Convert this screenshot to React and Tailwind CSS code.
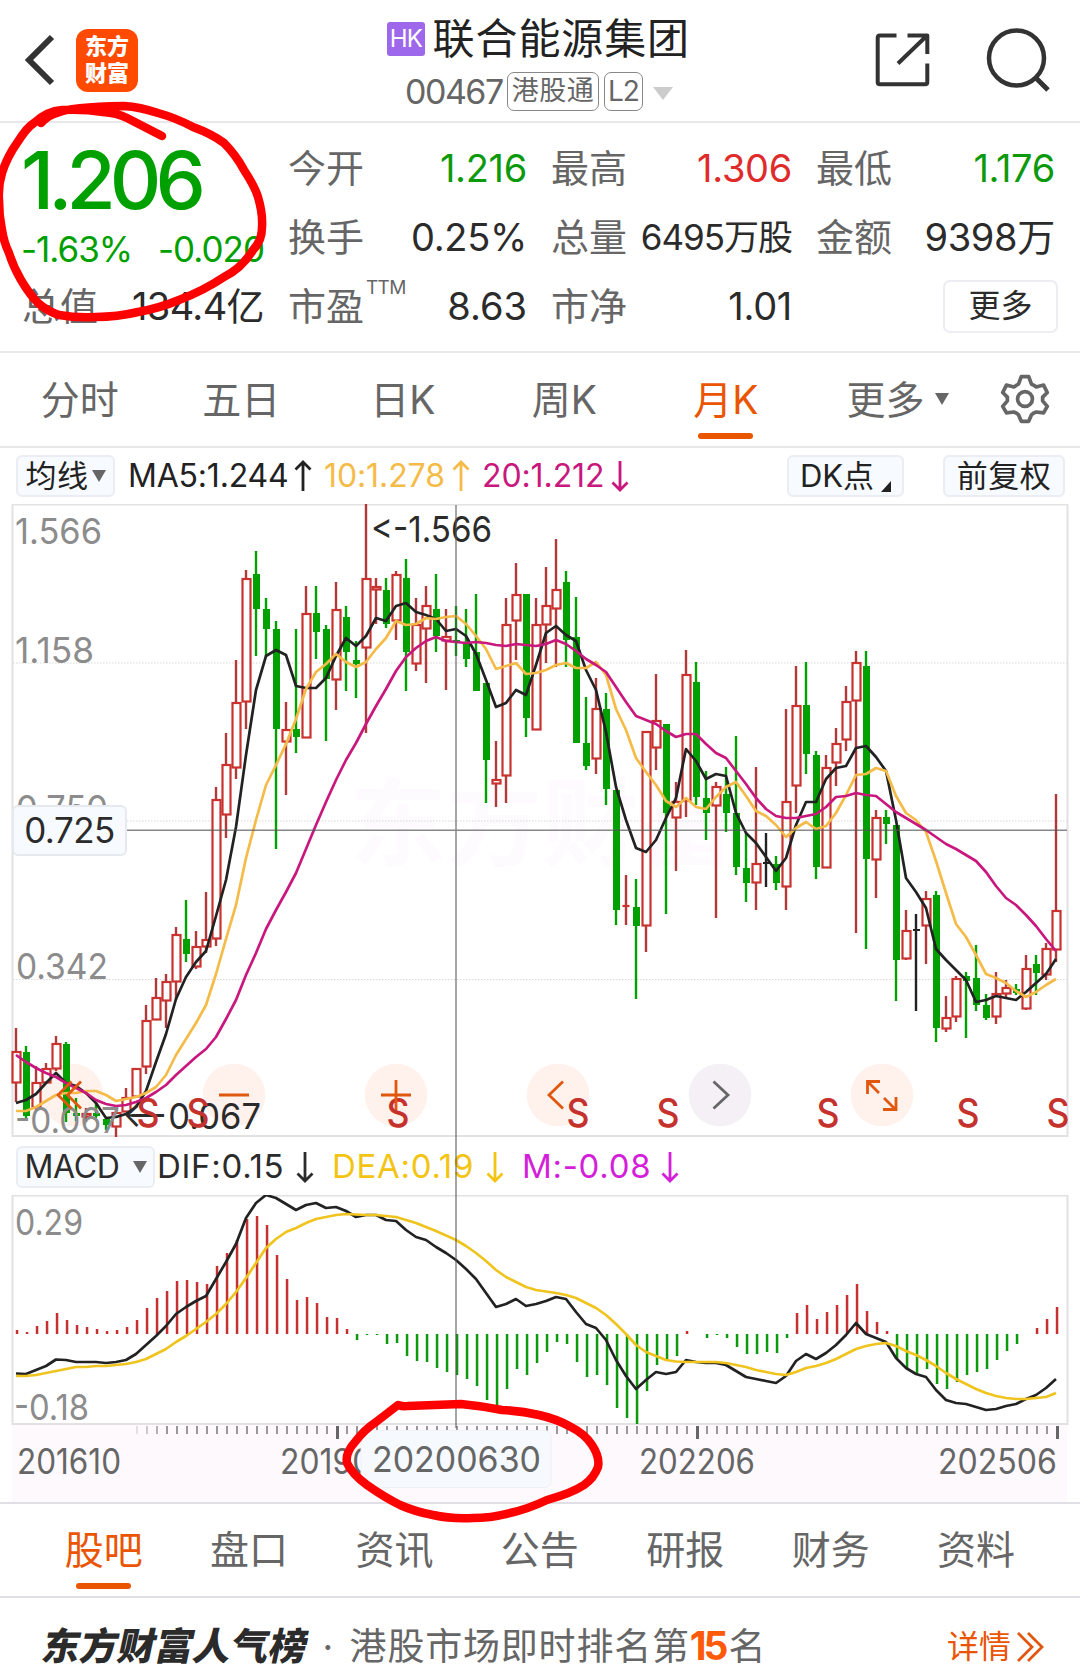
import React from 'react';

// x of the n-th month on every chart
const px = (i) => 16 + i * 10;

// [type, high, low, bodyTop, bodyBottom]  r = up, g = down, k = flat
const candles = [
  ['r', 1028, 1102, 1051, 1083], ['g', 1046, 1118, 1052, 1116], ['r', 1066, 1110, 1082, 1108], ['r', 1063, 1083, 1068, 1083],
  ['r', 1036, 1071, 1043, 1069], ['g', 1042, 1122, 1044, 1113], ['g', 1098, 1121, 1113, 1116], ['r', 1108, 1122, 1113, 1117],
  ['g', 1103, 1118, 1113, 1116], ['g', 1117, 1130, 1119, 1125], ['r', 1110, 1137, 1112, 1127], ['r', 1088, 1112, 1097, 1112],
  ['r', 1068, 1097, 1068, 1097], ['r', 1005, 1074, 1020, 1067], ['r', 978, 1020, 997, 1020], ['r', 974, 1028, 981, 1001],
  ['r', 927, 1000, 934, 982], ['g', 900, 962, 939, 954], ['r', 931, 969, 946, 967], ['r', 892, 953, 939, 947],
  ['r', 787, 946, 799, 939], ['r', 733, 838, 764, 815], ['r', 660, 779, 702, 768], ['r', 570, 729, 578, 702],
  ['g', 551, 656, 574, 609], ['g', 598, 656, 609, 629], ['g', 621, 849, 629, 729], ['r', 702, 795, 729, 742],
  ['g', 629, 753, 729, 737], ['r', 586, 738, 613, 738], ['g', 586, 659, 613, 632], ['g', 625, 741, 629, 679],
  ['r', 582, 710, 609, 680], ['g', 606, 691, 617, 652], ['g', 641, 698, 660, 664], ['r', 504, 733, 578, 648],
  ['r', 578, 624, 586, 590], ['g', 578, 628, 590, 624], ['r', 571, 640, 574, 621], ['g', 559, 691, 578, 652],
  ['r', 598, 671, 624, 664], ['r', 586, 683, 605, 629], ['g', 574, 652, 609, 636], ['r', 609, 690, 636, 641],
  ['g', 606, 656, 640, 643], ['g', 609, 667, 644, 659], ['g', 594, 690, 652, 691], ['g', 683, 803, 683, 760],
  ['r', 741, 807, 779, 784], ['r', 598, 803, 624, 776], ['r', 563, 660, 594, 621], ['g', 594, 737, 594, 718],
  ['r', 598, 730, 624, 730], ['r', 567, 663, 605, 625], ['r', 539, 667, 589, 609], ['g', 571, 667, 582, 640],
  ['g', 597, 743, 637, 743], ['g', 697, 770, 743, 766], ['r', 678, 774, 708, 759], ['g', 693, 805, 709, 789],
  ['g', 790, 925, 790, 910], ['r', 875, 925, 905, 907], ['g', 879, 999, 907, 926], ['r', 731, 952, 731, 926],
  ['r', 674, 770, 720, 748], ['g', 724, 914, 724, 813], ['r', 782, 871, 801, 818], ['r', 650, 817, 674, 801],
  ['g', 662, 805, 682, 797], ['g', 771, 840, 798, 813], ['r', 782, 918, 786, 806], ['g', 767, 832, 794, 813],
  ['g', 736, 875, 813, 867], ['g', 833, 902, 868, 883], ['r', 767, 910, 863, 883], ['k', 833, 887, 862, 864],
  ['g', 856, 890, 864, 883], ['r', 709, 910, 801, 887], ['r', 666, 813, 705, 786], ['g', 662, 774, 705, 754],
  ['g', 751, 879, 755, 867], ['r', 755, 868, 767, 868], ['r', 728, 786, 743, 763], ['r', 686, 751, 701, 740],
  ['r', 651, 933, 662, 701], ['g', 651, 949, 666, 859], ['r', 810, 898, 817, 860], ['g', 810, 844, 817, 824],
  ['g', 825, 1001, 825, 960], ['r', 910, 960, 930, 959], ['k', 914, 1011, 929, 931], ['r', 891, 964, 898, 926],
  ['g', 891, 1042, 895, 1028], ['r', 996, 1032, 1017, 1029], ['r', 976, 1022, 978, 1017], ['g', 972, 1038, 976, 981],
  ['g', 945, 1011, 978, 1005], ['g', 994, 1020, 1005, 1018], ['r', 972, 1024, 993, 1017], ['r', 980, 997, 987, 994],
  ['g', 984, 995, 989, 993], ['r', 955, 1010, 968, 1009], ['g', 955, 995, 964, 973], ['r', 943, 980, 948, 975],
  ['r', 794, 962, 910, 950],
];

const ma5 = [
  1103, 1100, 1094, 1083, 1073, 1083, 1086, 1093, 1103, 1118, 1117, 1114, 1107, 1091, 1062, 1034, 999, 977, 962, 951, 916, 880,
  827, 755, 690, 656, 650, 655, 686, 688, 688, 678, 656, 638, 646, 636, 618, 621, 606, 603, 612, 615, 619, 631, 629, 636, 654,
  680, 707, 703, 690, 695, 665, 633, 626, 635, 641, 670, 690, 732, 787, 820, 848, 852, 840, 818, 798, 749, 761, 779, 774, 776,
  813, 833, 843, 857, 871, 858, 825, 802, 802, 779, 768, 766, 748, 746, 757, 771, 820, 878, 892, 908, 949, 960, 970, 980, 1002,
  1000, 996, 998, 1000, 992, 983, 974, 959,
];
const ma10 = [
  1111, 1111, 1107, 1101, 1095, 1093, 1093, 1091, 1091, 1095, 1101, 1099, 1097, 1093, 1087, 1075, 1055, 1039, 1023, 1005, 974,
  939, 905, 858, 820, 785, 765, 744, 719, 689, 672, 664, 654, 662, 667, 662, 649, 638, 621, 625, 624, 618, 619, 617, 616, 624,
  636, 649, 669, 666, 663, 674, 673, 670, 665, 663, 668, 668, 662, 675, 709, 730, 758, 772, 785, 801, 807, 798, 807, 809, 797,
  787, 782, 796, 811, 816, 825, 837, 828, 822, 829, 826, 813, 795, 775, 774, 768, 771, 796, 813, 820, 832, 861, 893, 924, 937,
  955, 974, 978, 983, 991, 997, 992, 985, 979,
];
const ma20 = [
  1055, 1062, 1068, 1073, 1077, 1083, 1088, 1093, 1100, 1104, 1106, 1105, 1102, 1098, 1092, 1085, 1075, 1066, 1057, 1049, 1037,
  1019, 1000, 975, 953, 929, 910, 892, 873, 849, 825, 802, 780, 760, 743, 724, 706, 689, 671, 657, 648, 641, 637, 641, 642, 643,
  642, 643, 645, 646, 644, 645, 646, 644, 640, 644, 651, 659, 665, 672, 687, 702, 716, 720, 724, 731, 737, 734, 734, 744, 753,
  758, 771, 784, 798, 809, 816, 818, 818, 816, 814, 807, 797, 796, 793, 795, 796, 804, 812, 818, 824, 830, 837, 844, 849, 855,
  861, 872, 886, 898, 905, 915, 926, 939, 951,
];
const bars = [
  4, 2, 8, 13, 21, 14, 9, 7, 5, 3, 4, 7, 14, 26, 36, 43, 53, 54, 52, 50, 68, 81, 94, 115, 118, 109, 79, 55, 34, 37, 31, 17, 16,
  5, -6, -1, -1, -10, -9, -22, -27, -28, -34, -38, -41, -45, -52, -66, -71, -55, -35, -41, -29, -18, -8, -10, -28, -43, -41,
  -51, -74, -84, -90, -57, -31, -27, -22, 3, 0, -4, -1, -4, -13, -20, -20, -18, -19, -4, 21, 29, 15, 22, 29, 39, 50, 23, 12, 3,
  -24, -34, -39, -35, -50, -55, -48, -41, -38, -35, -26, -17, -10, 0, 6, 15, 27,
];
const dif = [
  1373.5, 1374, 1370, 1366, 1359.5, 1360, 1362, 1362, 1362, 1363, 1362, 1360, 1354, 1345, 1336, 1326, 1314, 1307, 1301, 1296,
  1279, 1262, 1244, 1218, 1203, 1195, 1198, 1204, 1210, 1205, 1203, 1208, 1207, 1211, 1217, 1215, 1215, 1220, 1221, 1230, 1237,
  1240, 1247, 1253, 1260, 1269, 1279, 1293, 1307, 1304, 1299, 1306, 1304, 1301, 1297, 1299, 1312, 1324, 1328, 1340, 1360, 1376,
  1389, 1380, 1372, 1374, 1372, 1360, 1362, 1363, 1363, 1365, 1371, 1377, 1379, 1381, 1383, 1376, 1361, 1354, 1359, 1353, 1345,
  1335, 1323, 1334, 1338, 1342, 1358, 1368, 1374, 1377, 1390, 1400, 1403, 1404, 1407, 1410, 1409, 1406, 1404, 1399, 1395, 1388,
  1379,
];
const dea = [
  1376, 1376, 1375, 1373, 1371, 1369, 1367, 1367, 1366, 1366, 1365, 1364, 1362, 1359, 1354, 1349, 1342, 1336, 1329, 1322, 1314,
  1304, 1292, 1278, 1263, 1248, 1239, 1232, 1228, 1223, 1219, 1217, 1215, 1214, 1214.5, 1215, 1215, 1216, 1217, 1220, 1223,
  1227, 1231, 1235.5, 1240, 1246, 1253, 1261, 1270, 1277, 1282, 1287, 1290, 1291.5, 1293, 1295, 1298, 1303, 1308, 1315, 1324,
  1334, 1345, 1352, 1356, 1360, 1361.5, 1362, 1362, 1362, 1362, 1363, 1365, 1367, 1370, 1372, 1374, 1375, 1372, 1368, 1366,
  1363, 1359, 1354, 1349, 1346, 1344, 1343, 1346, 1351, 1355, 1360, 1366, 1373, 1379, 1384, 1389, 1393, 1396, 1398, 1399, 1399,
  1398, 1397, 1393,
];

const toPoints = (ys) => ys.map((y, i) => `${px(i)},${y}`).join(' ');

const periods = ['分时', '五日', '日K', '周K', '月K'];
const sections = ['股吧', '盘口', '资讯', '公告', '研报', '财务', '资料'];

function Line({ ys, color }) {
  return <polyline points={toPoints(ys)} fill="none" stroke={color} strokeWidth="2.7" strokeLinejoin="round" />;
}

// Text on a chart, w is the drawn width
function Label({ x, y, w, size = 36, color = '#8c8c8c', children }) {
  return (
    <text x={x} y={y} fontSize={size} fill={color} textLength={w} lengthAdjust="spacingAndGlyphs">
      {children}
    </text>
  );
}

function Candle({ i, c }) {
  const [type, high, low, top, bottom] = c;
  const x = px(i);
  if (type === 'r') {
    return (
      <g stroke="#c8322f" strokeWidth="2.2">
        <path d={`M${x} ${high}V${top}M${x} ${bottom}V${low}`} stroke="#b03a3a" strokeWidth="2.4" />
        {bottom - top < 3 ? (
          <path d={`M${x - 3.5} ${top + 1}h7`} />
        ) : (
          <rect x={x - 3.5} y={top + 1} width="8" height={Math.max(bottom - top - 1.5, 1.5)} fill="#fff" />
        )}
      </g>
    );
  }
  const color = type === 'g' ? '#00a000' : '#222';
  return (
    <g fill={color}>
      <rect x={x - 1.2} y={high} width="2.4" height={low - high} />
      <rect x={x - 3} y={top} width="7" height={Math.max(bottom - top, 2)} />
    </g>
  );
}

function KLineChart() {
  return (
    <svg className="block" width="1080" height="633" viewBox="0 504 1080 633" fontFamily="Inter, 'Noto Sans CJK SC', sans-serif">
      <text x="350" y="858" fontSize="96" fontWeight="bold" fill="#fefbfe" fontFamily="'Noto Sans CJK SC', sans-serif">东方财富</text>
      <path d="M12.5 504.5H1067.5V1136H12.5Z" fill="none" stroke="#e2e2e2" strokeWidth="2" />
      <path d="M13 663H1067M13 821H1067M13 979.5H1067" stroke="#d8d8d8" strokeDasharray="1.5 1.5" />
      {/* round tool buttons */}
      <g fill="#fff1ec">
        {[72, 234, 396, 558, 882].map((x) => <circle key={x} cx={x} cy="1095" r="31.3" />)}
        <circle cx="720" cy="1095" r="31.3" fill="#f4f0f6" />
      </g>
      {candles.map((c, i) => <Candle key={i} i={i} c={c} />)}
      <Line ys={ma5} color="#222" />
      <Line ys={ma10} color="#f5bb48" />
      <Line ys={ma20} color="#c8187e" />
      <Label x={15} y={544} w={87}>1.566</Label>
      <Label x={15} y={663} w={79}>1.158</Label>
      <Label x={16} y={821} w={92}>0.750</Label>
      <Label x={16} y={979} w={92}>0.342</Label>
      <Label x={15} y={1133} w={105}>-0.067</Label>
      <Label x={371} y={542} w={121} color="#2b2b2b">{'<-1.566'}</Label>
      <Label x={122} y={1129} w={139} color="#2b2b2b">{'<--0.067'}</Label>

      <g fontSize="39" fontWeight="500" fill="#c5322d" textAnchor="middle">
        {[148, 198, 398, 578, 668, 828, 968, 1058].map((x) => <text key={x} x={x} y="1127" textLength="23" lengthAdjust="spacingAndGlyphs">S</text>)}
      </g>
      <g fill="none" stroke="#e0580f" strokeWidth="2.8">
        <path d="M71.500 1081.500 58 1095l13.500 13.500M81 1081.500 67.500 1095l13.500 13.500" />
        <path d="M219 1095h30M381 1095h30M396 1080v30" />
        <path d="M563 1081.5 549 1095l14 13.5" />
        <path d="M713.500 1081.500 728 1095l-14.500 13.500" stroke="#666" />
        <path d="M867.500 1094v-12.500h12.500M868 1082l11 11M884 1098l11.500 11.500M896 1097v12.500h-13" />
      </g>
    </svg>
  );
}

function MacdChart() {
  return (
    <svg className="block" width="1080" height="230" viewBox="0 1195 1080 230" fontFamily="Inter, sans-serif">
      <path d="M12.5 1195.5H1067.5V1424H12.5Z" fill="none" stroke="#e2e2e2" strokeWidth="2" />
      {bars.map((h, i) => (
        <rect key={i} x={px(i) - 0.2} width="2.5" y={h > 0 ? 1334 - h : 1334} height={Math.abs(h)} fill={h > 0 ? '#c53030' : '#0c9a0c'} />
      ))}
      <Line ys={dif} color="#222" />
      <Line ys={dea} color="#f0c41e" />
      <Label x={15} y={1235} w={68}>0.29</Label>
      <Label x={14} y={1420} w={75}>-0.18</Label>
    </svg>
  );
}

function TimeAxis() {
  const ticks = bars.map((_, i) => i).filter((i) => i > 11);
  return (
    <svg className="block" width="1080" height="77" viewBox="0 1425 1080 77" fontFamily="Inter, sans-serif">
      <rect x="12" y="1425" width="1055" height="77" fill="#fdf9fd" />
      {ticks.map((i) => {
        const major = i % 36 === 32;
        return (
          <rect key={i} x={px(i)} y="1426" width={major ? 3 : 2} height={major ? 13 : 8} fill={major ? '#666' : '#999'} opacity={i < 15 ? 0.25 * (i - 11) : 1} />
        );
      })}
      <Label x={17} y={1474} w={104} size={35} color="#666">201610</Label>
      <Label x={280} y={1474} w={112} size={35} color="#666">201906</Label>
      <Label x={639} y={1474} w={116} size={35} color="#666">202206</Label>
      <Label x={938} y={1474} w={119} size={35} color="#666">202506</Label>
      <rect x="361" y="1430.500" width="190" height="57" rx="6" fill="#f6faff" stroke="#eef1f6" />
      <Label x={372} y={1472} w={169} color="#666">20200630</Label>
    </svg>
  );
}

function Stat({ label, value, color = 'text-[#2b2b2b]', className = 'tracking-[-0.300px]' }) {
  return (
    <div className="flex h-[69px] items-center justify-between whitespace-nowrap">
      <span className="-ml-px text-[#666]">{label}</span>
      <span className={`${color} ${className}`}>{value}</span>
    </div>
  );
}

function Arrow({ up, className }) {
  return (
    <svg className={className} width="18" height="32" viewBox="0 0 18 32" fill="none" stroke="currentColor" strokeWidth="2.8">
      <path d={up ? 'M9 31V2M1.500 9.500 9 2l7.500 7.500' : 'M9 1v29M1.500 22.500 9 30l7.500-7.500'} />
    </svg>
  );
}

function Caret({ className }) {
  return (
    <svg className={className} width="14" height="12" viewBox="0 0 14 12" fill="#666">
      <path d="M0 0h14L7 12z" />
    </svg>
  );
}

export default function App() {
  return (
    <div className="relative h-[1674px] w-[1080px] overflow-hidden bg-white font-[Inter,'Noto_Sans_CJK_SC',sans-serif] text-[#666]">
      {/* header */}
      <header className="flex h-[123px] border-b-2 border-[#e8e8e8]">
        <svg className="ml-[24px] mt-[34px]" width="32" height="52" viewBox="0 0 32 52" fill="none" stroke="#333" strokeWidth="6">
          <path d="M28 3 5 26l23 23" strokeLinejoin="miter" />
        </svg>
        <div className="ml-[20px] mt-[29px] flex h-[63px] w-[62px] flex-col items-center justify-center rounded-[12px] bg-[#ff4a00] pb-[2px] text-[22px] font-black leading-[27px] text-white">
          <span>东方</span>
          <span>财富</span>
        </div>
        <div className="ml-[249px] flex w-[303px] flex-col">
          <div className="mt-[12px] flex h-[54px] items-center whitespace-nowrap">
            <span className="flex h-[34px] w-[42px] items-center justify-center rounded-[3px] bg-[#9e68ec] text-[24px] tracking-[-1px] text-white">HK</span>
            <span className="-mt-[2px] ml-[8px] text-[42px] tracking-[0.900px] text-[#222]">联合能源集团</span>
          </div>
          <div className="mt-[5px] flex h-[40px] items-center whitespace-nowrap pl-[18px]">
            <span className="w-[102px] text-[34px] tracking-[-1.500px]">00467</span>
            <span className="flex h-[39px] w-[92px] items-center justify-center rounded-[7px] border-[1.500px] border-[#888] text-[27px] tracking-[0.500px]">港股通</span>
            <span className="ml-[5px] flex h-[39px] w-[39px] items-center justify-center rounded-[7px] border-[1.500px] border-[#888] text-[28px] tracking-[-1px]">L2</span>
            <svg className="ml-[10px] mt-1" width="20" height="13" viewBox="0 0 20 13" fill="#ccc"><path d="M0 0h20L10 13z" /></svg>
          </div>
        </div>
        <svg className="ml-[184px] mt-[31px]" width="58" height="58" viewBox="874 31 58 58" fill="none" stroke="#333" strokeWidth="4" strokeLinejoin="round">
          <path d="M896.500 35.500H880q-2.300 0-2.300 2.300V82q0 2.300 2.300 2.300h45q2.300 0 2.300-2.300V63.500M907.500 35.500h19.800V54M926 36.500 898 63.500" />
        </svg>
        <svg className="ml-[52px] mt-[26px]" width="72" height="72" viewBox="982 25 72 72" fill="none" stroke="#333" strokeWidth="4.500">
          <circle cx="1014.500" cy="57" r="27.500" />
          <path d="M1033.500 76.500 1046 89" strokeWidth="5" />
        </svg>
      </header>

      {/* quote */}
      <section className="grid h-[230px] grid-cols-[241px_238px_240px_238px] grid-rows-[69px_69px_69px] gap-x-[25px] border-b-2 border-[#e8e8e8] pl-[23px] pt-[11px] text-[38px]">
        <div className="row-span-2 whitespace-nowrap text-[#00a000]">
          <div className="-ml-[2px] mt-[5px] h-[80px] text-[80px] font-medium leading-[82px] tracking-[-6px]">1.206</div>
          <div className="-ml-[2px] mt-[7px] flex justify-between text-[35px] leading-[46px] tracking-[-1px]">
            <span>-1.63%</span>
            <span>-0.020</span>
          </div>
        </div>
        <Stat label="今开" value="1.216" color="text-[#0c9a0c]" />
        <Stat label="最高" value="1.306" color="text-[#e02b2b]" />
        <Stat label="最低" value="1.176" color="text-[#0c9a0c]" />
        <Stat label="换手" value="0.25%" />
        <Stat label="总量" value="6495万股" className="text-[35px] tracking-[-1px]" />
        <Stat label="金额" value="9398万" />
        <Stat label="总值" value="134.4亿" className="tracking-[-0.600px]" />
        <div className="flex h-[69px] items-center whitespace-nowrap">
          <span className="-ml-px">市盈</span>
          <span className="-mt-[36px] ml-[2px] text-[19px] tracking-[-0.700px]">TTM</span>
          <span className="ml-auto text-[#2b2b2b]">8.63</span>
        </div>
        <Stat label="市净" value="1.01" />
        <div className="flex h-[69px] items-center justify-end">
          <div className="-mr-[3px] flex h-[53px] w-[115px] items-center justify-center rounded-[7px] border-2 border-[#ececf2] pb-[2px] text-[32px] text-[#2b2b2b]">更多</div>
        </div>
      </section>

      {/* periods */}
      <nav className="flex h-[95px] border-b-2 border-[#e8e8ea] text-[39px]">
        {periods.map((p) => (
          <div key={p} className={`flex w-[161.500px] flex-col items-center ${p === '月K' ? 'text-[#ea5504]' : ''}`}>
            <span className="-ml-[2px] mt-[17px] leading-[60px]">{p}</span>
            {p === '月K' && <span className="-ml-[3px] mt-[3px] h-[6px] w-[55px] rounded-full bg-[#ea5504]" />}
          </div>
        ))}
        <span className="ml-[39px] mt-[17px] leading-[60px]">更多</span>
        <Caret className="ml-[10px] mt-[40px]" />
        <svg className="ml-[50px] mt-[20px]" width="52" height="52" viewBox="-28 -28 56 56" fill="none" stroke="#666" strokeWidth="4" strokeLinejoin="round">
          <path d="M-4-24h8l3 8q3 1 5 3l8-2 4 8-5 5v4l5 6-4 7-8-1q-3 1-5 3l-3 7h-8l-3-7q-2-2-5-3l-8 1-4-7 5-6v-4l-5-5 4-8 8 2q3-2 5-3z" />
          <circle r="8" />
        </svg>
      </nav>

      <div className="relative">
        {/* moving averages */}
        <div className="flex h-[56px] items-center whitespace-nowrap pl-4 text-[31px]">
          <span className="flex h-[42px] w-[99px] items-center justify-center rounded-[6px] border-2 border-[#eaedf3] bg-[#f7faff] tracking-[0.500px] text-[#222]">均线<Caret className="ml-[3px]" /></span>
          <span className="ml-[13px] w-[166px] text-[32px] tracking-[-0.200px] text-[#222]">MA5:1.244</span>
          <Arrow up className="w-[18px] text-[#222]" />
          <span className="ml-[12px] w-[128px] text-[32px] tracking-[-0.100px] text-[#f5bb48]">10:1.278</span>
          <Arrow up className="text-[#f5bb48]" />
          <span className="ml-[12px] w-[129px] text-[32px] tracking-[-0.100px] text-[#c8187e]">20:1.212</span>
          <Arrow className="text-[#c8187e]" />
          <span className="ml-auto flex h-[42px] w-[117px] items-center justify-center rounded-[6px] border-2 border-[#eaedf3] bg-[#f7faff] text-[#222]">
            DK点
            <svg className="ml-[7px] mt-[20px]" width="10" height="11" viewBox="0 0 10 11" fill="#222"><path d="M10 0v11H0z" /></svg>
          </span>
          <span className="ml-[39px] mr-[15px] flex h-[42px] w-[122px] items-center justify-center rounded-[6px] border-2 border-[#eaedf3] bg-[#f7faff] tracking-[0.500px] text-[#222]">前复权</span>
        </div>

        <KLineChart />

        {/* macd */}
        <div className="flex h-[58px] items-center whitespace-nowrap pl-4 pt-[2px] text-[33px]">
          <span className="flex h-[42px] w-[139px] items-center justify-center rounded-[6px] border-2 border-[#eaedf3] bg-[#f7faff] text-[32px] tracking-[-0.300px] text-[#2b2b2b]">MACD<Caret className="ml-[13px]" /></span>
          <span className="ml-[2px] w-[139px] tracking-[0.700px] text-[#2b2b2b]">DIF:0.15</span>
          <Arrow className="text-[#2b2b2b]" />
          <span className="ml-[18px] w-[154px] tracking-[0.700px] text-[#f3c414]">DEA:0.19</span>
          <Arrow className="text-[#f3c414]" />
          <span className="ml-[18px] w-[139px] tracking-[0.700px] text-[#d41fd9]">M:-0.08</span>
          <Arrow className="text-[#d41fd9]" />
        </div>

        <MacdChart />
        <TimeAxis />

        {/* crosshair */}
        <svg className="absolute left-0 top-[56px]" width="1080" height="924" viewBox="0 504 1080 924" fill="none" stroke="#555" strokeOpacity="0.7" strokeWidth="1.500">
          <path d="M456 505V1428M126 830.300H1067" />
        </svg>
        <div className="absolute left-[12px] top-[357px] flex h-[51px] w-[115px] items-center justify-center rounded-[6px] border-2 border-[#e6e9ef] bg-[#f7faff] text-[35px] tracking-[-0.500px] text-[#2b2b2b]">0.725</div>
      </div>

      {/* sections */}
      <nav className="flex h-[96px] border-y-2 border-[#dfdfe5] pl-[31px] text-[39px]">
        {sections.map((s, i) => (
          <div key={s} className={`flex w-[145.400px] flex-col items-center ${i === 0 ? 'text-[#ea5504]' : ''}`}>
            <span className="mt-[16px] leading-[60px]">{s}</span>
            {i === 0 && <span className="mt-[3px] h-[6px] w-[55px] rounded-full bg-[#ea5504]" />}
          </div>
        ))}
      </nav>

      <footer className="flex h-[76px] items-center whitespace-nowrap pl-[43px] pt-[21px] text-[37px]">
        <span className="inline-block -skew-x-12 text-[37.800px] font-black text-[#2b2b2b]">东方财富人气榜</span>
        <span className="ml-[15px] w-[27px]">·</span>
        <span className="tracking-[0.800px]">港股市场即时排名第</span>
        <span className="text-[39px] font-bold tracking-[-3px] text-[#ff5a0a]">15</span>
        <span className="ml-[3px]">名</span>
        <span className="ml-auto text-[32px] text-[#ea5504]">详情</span>
        <svg className="ml-[5px] mr-[34px]" width="30" height="32" viewBox="0 0 30 32" fill="none" stroke="#e0580f" strokeWidth="2.800">
          <path d="M2 2l14 14L2 30M12 2l14 14-14 14" />
        </svg>
      </footer>

      {/* hand-drawn marks */}
      <svg className="pointer-events-none absolute inset-0" width="1080" height="1674" fill="none" stroke="#ff0000" strokeWidth="8.500" strokeLinecap="round" strokeLinejoin="round">
        <path d="M41 123Q49 115 57 113Q70 107 124 106Q140 107 158 113Q176 118 193 127Q212 134 224 143Q236 155 244 170Q255 187 258 197Q263 214 262 227Q262 241 253 250Q242 268 224 277Q203 291 179 300Q160 308 138 312Q117 317 96 317Q76 318 59 315Q47 311 38 303Q30 295 21 280Q13 266 9 253Q4 243 2 230Q-1 215-1 200Q-2 186 2 173Q7 157 17 143Q27 127 34 123Q47 111 62 110Q84 109 103 112Q117 113 127 118L162 136" />
        <path d="M398 1405Q404 1407 408 1406L461 1404Q482 1406 502 1410Q522 1411 539 1415Q557 1419 571 1427Q585 1434 592 1445Q600 1457 598 1467Q594 1478 584 1485Q572 1493 547 1500Q528 1509 510 1513Q490 1518 473 1518Q450 1519 433 1515Q416 1512 400 1505Q384 1497 367 1485Q352 1474 347 1463Q345 1453 355 1442Q364 1430 376 1422Z" />
      </svg>
    </div>
  );
}
